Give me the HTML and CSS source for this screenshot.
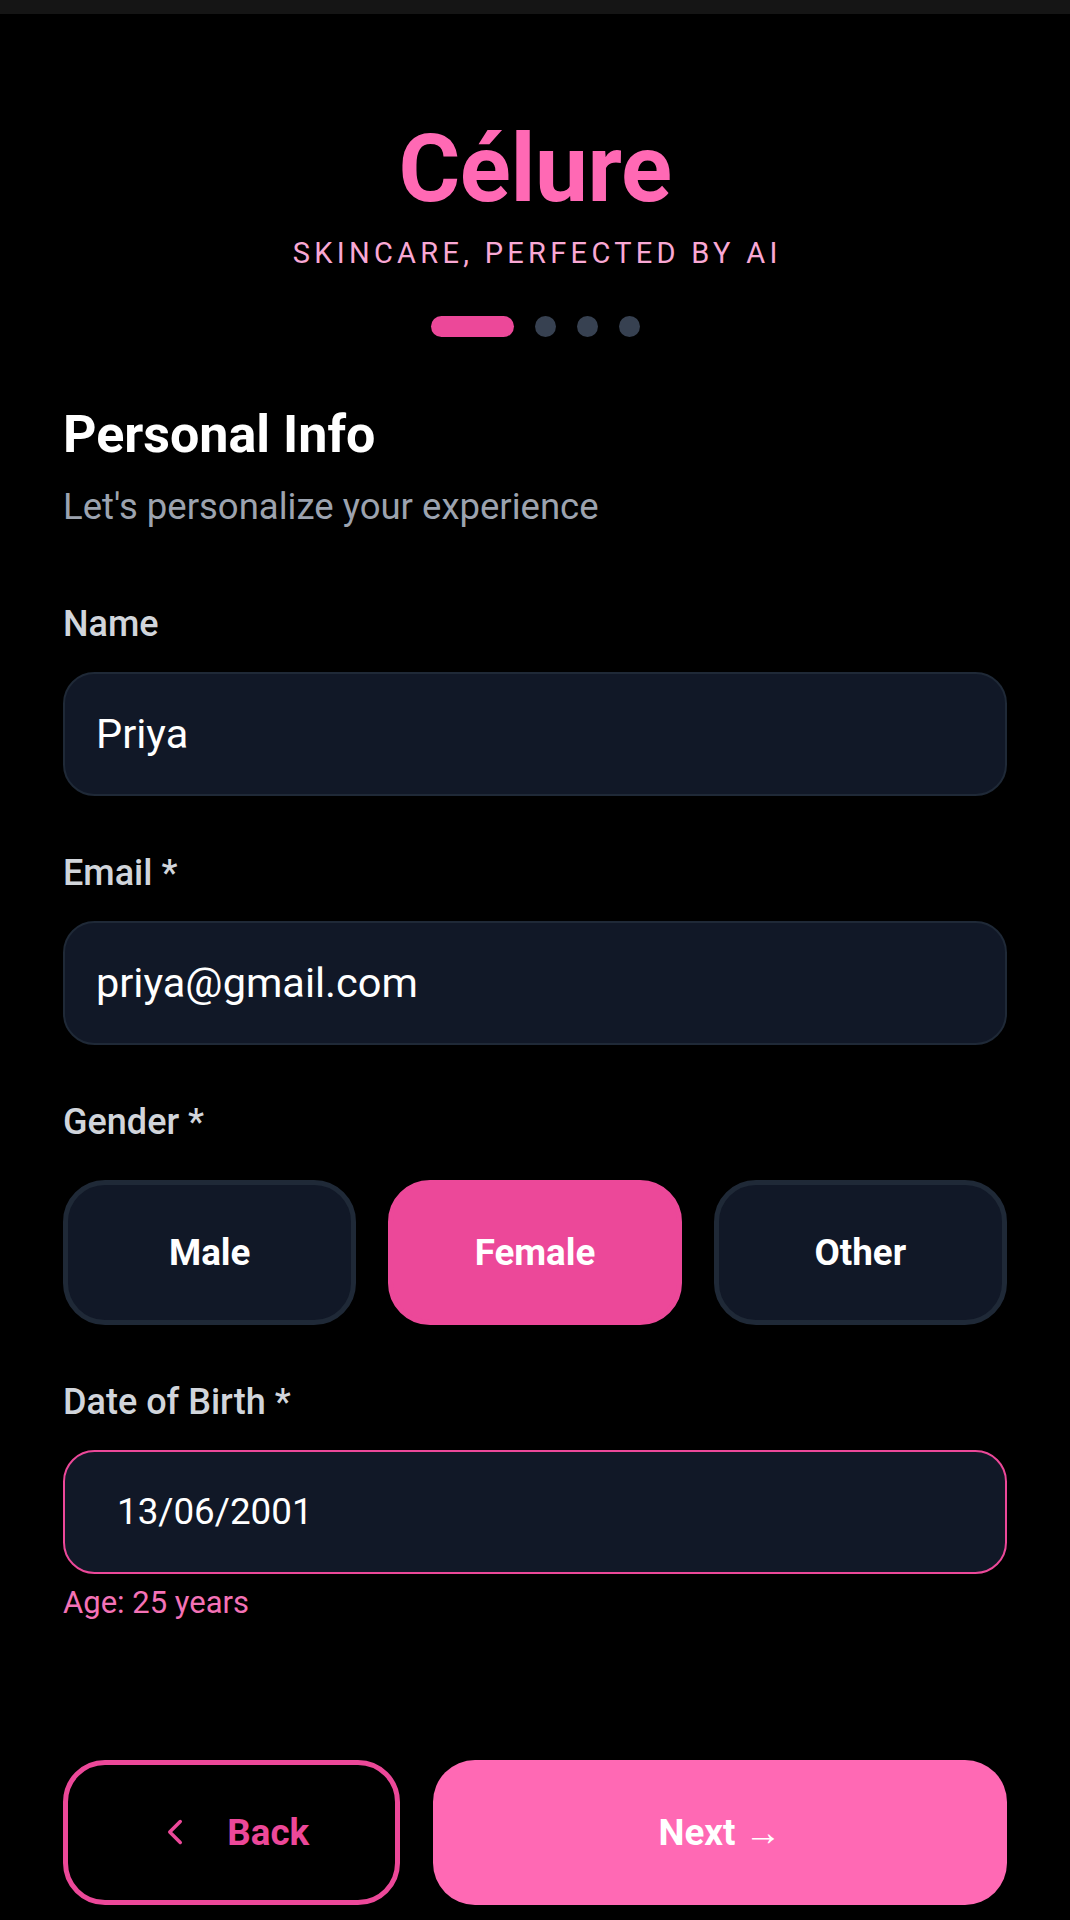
FILE: index.html
```html
<!DOCTYPE html>
<html lang="en">
<head>
<meta charset="utf-8">
<title>Célure – Personal Info</title>
<link rel="stylesheet" href="styles.css">
</head>
<body>
<div class="topbar"></div>
<main class="page">
  <header class="brand">
    <h1 class="logo">Célure</h1>
    <p class="tagline">SKINCARE, PERFECTED BY AI</p>
    <div class="steps">
      <span class="step active"></span>
      <span class="step"></span>
      <span class="step"></span>
      <span class="step"></span>
    </div>
  </header>

  <section class="form">
    <h2 class="title">Personal Info</h2>
    <p class="subtitle">Let's personalize your experience</p>

    <div class="field first">
      <label class="label" for="name">Name</label>
      <input class="input" id="name" type="text" value="Priya">
    </div>

    <div class="field">
      <label class="label" for="email">Email *</label>
      <input class="input" id="email" type="text" value="priya@gmail.com">
    </div>

    <div class="field">
      <span class="label label-gender">Gender *</span>
      <div class="genders">
        <button class="gender">Male</button>
        <button class="gender selected">Female</button>
        <button class="gender">Other</button>
      </div>
    </div>

    <div class="field">
      <label class="label" for="dob">Date of Birth *</label>
      <input class="input date" id="dob" type="text" value="13/06/2001">
      <p class="age">Age: 25 years</p>
    </div>
  </section>

  <footer class="actions">
    <button class="btn back">
      <svg class="chev" viewBox="0 0 24 24" fill="none" stroke="currentColor" stroke-width="2" stroke-linecap="round" stroke-linejoin="round"><path d="m15 18-6-6 6-6"/></svg>
      <span>Back</span>
    </button>
    <button class="btn next">Next →</button>
  </footer>
</main>
</body>
</html>
```
FILE: styles.css
```css
* { box-sizing: border-box; }

html, body {
  margin: 0;
  padding: 0;
  background: #000;
}

body {
  font-family: Roboto, "Noto Sans", "Liberation Sans", sans-serif;
  color: #fff;
  min-height: 1920px;
}

.topbar {
  height: 14px;
  background: #151515;
}

.page {
  padding: 108px 63px 0;
  display: flex;
  flex-direction: column;
}

.brand {
  display: flex;
  flex-direction: column;
  align-items: center;
}

.logo {
  margin: 0;
  font-size: 94.5px;
  line-height: 94.5px;
  font-weight: 700;
  color: #ff69b4;
  letter-spacing: -0.4px;
}

.tagline {
  margin: 16px 0 0;
  font-size: 29px;
  line-height: 40px;
  font-weight: 400;
  letter-spacing: 4.3px;
  text-indent: 4.3px;
  color: #f9a8d4;
}

.steps {
  margin-top: 43px;
  display: flex;
  gap: 21px;
}

.step {
  width: 21px;
  height: 21px;
  border-radius: 50%;
  background: #374151;
}

.step.active {
  width: 83px;
  border-radius: 10.5px;
  background: #ec4899;
}

.form {
  display: flex;
  flex-direction: column;
}

.title {
  margin: 63px 0 0;
  font-size: 52px;
  line-height: 70px;
  font-weight: 700;
  color: #fff;
}

.subtitle {
  margin: 12.7px 0 0;
  font-size: 36.5px;
  line-height: 50px;
  color: #9ca3af;
}

.field {
  display: flex;
  flex-direction: column;
  margin-top: 52.7px;
}

.field.first {
  margin-top: 67.5px;
}

.label {
  font-size: 36px;
  line-height: 48px;
  font-weight: 500;
  color: #d1d5db;
  margin-bottom: 24.3px;
}

.label-gender {
  margin-bottom: 34.3px;
}

.input {
  display: block;
  width: 100%;
  height: 124px;
  margin: 0;
  padding: 0 31px;
  border: 2.6px solid #1f2937;
  border-radius: 31.5px;
  background: #111827;
  color: #fff;
  font-family: Roboto, "Noto Sans", "Liberation Sans", sans-serif;
  font-size: 41.5px;
  outline: none;
  appearance: none;
}

.input.date {
  border-color: #ec4899;
  padding-left: 52px;
  font-size: 36.75px;
}

.age {
  margin: 8px 0 0;
  font-size: 31px;
  line-height: 42px;
  color: #f472b6;
}

.genders {
  display: grid;
  grid-template-columns: repeat(3, 1fr);
  gap: 32px;
}

.gender {
  height: 145px;
  margin: 0;
  border: 5.25px solid #1f2937;
  border-radius: 42px;
  background: #111827;
  color: #fff;
  font-family: Roboto, "Noto Sans", "Liberation Sans", sans-serif;
  font-size: 36.75px;
  font-weight: 700;
}

.gender.selected {
  background: #ec4899;
  border-color: #ec4899;
}

.actions {
  margin-top: 136px;
  display: flex;
  gap: 33px;
}

.btn {
  height: 145px;
  margin: 0;
  border-radius: 42px;
  font-family: Roboto, "Noto Sans", "Liberation Sans", sans-serif;
  font-size: 36.75px;
  font-weight: 700;
  display: flex;
  align-items: center;
  justify-content: center;
}

.back {
  width: 337px;
  flex: none;
  border: 5.25px solid #ec4899;
  background: #000;
  color: #ec4899;
  gap: 31.5px;
}

.chev {
  width: 42px;
  height: 42px;
}

.next {
  flex: 1;
  border: none;
  background: #ff69b4;
  color: #fff;
}
```
